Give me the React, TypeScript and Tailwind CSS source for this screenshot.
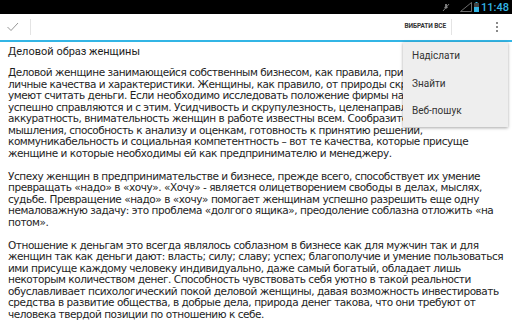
import React from "react";

const p1 = [
  "Деловой женщине занимающейся собственным бизнесом, как правила, присущи",
  "личные качества и характеристики. Женщины, как правило, от природы скрупулезны",
  "умеют считать деньги. Если необходимо исследовать положение фирмы на рынке, то",
  "успешно справляются и с этим. Усидчивость и скрупулезность, целенаправленность,",
  "аккуратность, внимательность женщин в работе известны всем. Сообразительность,",
  "мышления, способность к анализу и оценкам, готовность к принятию решений,",
  "коммуникабельность и социальная компетентность – вот те качества, которые присуще",
  "женщине и которые необходимы ей как предпринимателю и менеджеру.",
];
const p2 = [
  "Успеху женщин в предпринимательстве и бизнесе, прежде всего, способствует их умение",
  "превращать «надо» в «хочу». «Хочу» - является олицетворением свободы в делах, мыслях,",
  "судьбе. Превращение «надо» в «хочу» помогает женщинам успешно разрешить еще одну",
  "немаловажную задачу: это проблема «долгого ящика», преодоление соблазна отложить «на",
  "потом».",
];
const p3 = [
  "Отношение к деньгам это всегда являлось соблазном в бизнесе как для мужчин так и для",
  "женщин так как деньги дают: власть; силу; славу; успех; благополучие и умение пользоваться",
  "ими присуще каждому человеку индивидуально, даже самый богатый, обладает лишь",
  "некоторым количеством денег. Способность чувствовать себя уютно в такой реальности",
  "обуславливает психологический покой деловой женщины, давая возможность инвестировать",
  "средства в развитие общества, в добрые дела, природа денег такова, что они требуют от",
  "человека твердой позиции по отношению к себе.",
];

function Para({ lines }: { lines: string[] }) {
  return (
    <div className="flex flex-col">
      {lines.map((l, i) => (
        <div key={i} className="h-[11.5px] leading-[11.5px] whitespace-nowrap">
          {l}
        </div>
      ))}
    </div>
  );
}

export default function App() {
  return (
    <div className="relative w-[512px] h-[320px] overflow-hidden bg-white">
      {/* status bar */}
      <div className="h-[14px] bg-black flex items-center justify-end pr-[3px]">
        <svg width="8" height="9" viewBox="0 0 8 9" className="mr-[10px]">
          <path d="M3 1 L5 1 L5 5 L3 5 Z" fill="#777" />
          <path d="M2 4 Q4 7 6 4" stroke="#777" strokeWidth="0.8" fill="none" />
          <path d="M1 8 L7 1" stroke="#999" strokeWidth="0.8" />
        </svg>
        <svg width="12" height="10" viewBox="0 0 12 10" className="mr-[2px]">
          <path d="M11.5 0.5 L11.5 9.5 L0.5 9.5 Z" fill="none" stroke="#888" strokeWidth="0.8" />
        </svg>
        <svg width="5" height="10" viewBox="0 0 5 10" className="mr-[2px]">
          <rect x="1.5" y="0" width="2" height="1" fill="#33b5e5" />
          <rect x="0" y="1" width="5" height="9" fill="#444" />
          <rect x="0" y="5" width="5" height="5" fill="#33b5e5" />
        </svg>
        <span className="text-[11px] leading-none font-medium text-[#33b5e5] font-['Roboto',sans-serif]">11:48</span>
      </div>
      {/* action bar */}
      <div className="h-[28px] flex items-center border-b-2 border-[#33b5e5] bg-white">
        <svg width="12" height="10" viewBox="0 0 12 10" className="ml-[7px]">
          <path d="M0.5 5 L4 8.5 L11 1" stroke="#8a8a8a" strokeWidth="0.9" fill="none" />
        </svg>
        <div className="ml-[11px] w-px h-[16px] bg-[#e4e4e4]" />
        <div className="flex-1" />
        <span className="text-[6.5px] font-bold text-[#333] font-['Roboto',sans-serif] tracking-[-0.1px]">
          ВИБРАТИ ВСЕ
        </span>
        <div className="ml-[5px] w-px h-[16px] bg-[#e4e4e4]" />
        <div className="ml-[44px] mr-[14px] flex flex-col items-center justify-center gap-[2px]">
          <div className="w-[2px] h-[2px] bg-[#8a8a8a]" />
          <div className="w-[2px] h-[2px] bg-[#8a8a8a]" />
          <div className="w-[2px] h-[2px] bg-[#8a8a8a]" />
        </div>
      </div>
      {/* content */}
      <div className="pl-[8px] text-[#1e1e1e]">
        <div className="h-[18px] mt-[1px] leading-[18px] text-[11px] font-['Roboto',sans-serif]">
          Деловой образ женщины
        </div>
        <div className="mt-[6px] text-[10.5px] tracking-[-0.45px] font-['DejaVu_Sans',sans-serif]">
          <Para lines={p1} />
          <div className="h-[11.5px]" />
          <Para lines={p2} />
          <div className="h-[11.5px]" />
          <Para lines={p3} />
        </div>
      </div>
      {/* popup menu */}
      <div className="absolute left-[403px] top-[42px] w-[105px] h-[85px] bg-[#eeeeee] shadow-[0_1px_3px_rgba(0,0,0,0.35)] flex flex-col font-['Roboto',sans-serif] text-[10px] text-[#333]">
        <div className="h-[27.5px] flex items-center pl-[9px]">Надіслати</div>
        <div className="h-[27.5px] flex items-center pl-[9px]">Знайти</div>
        <div className="h-[27.5px] flex items-center pl-[9px]">Веб-пошук</div>
      </div>
    </div>
  );
}
